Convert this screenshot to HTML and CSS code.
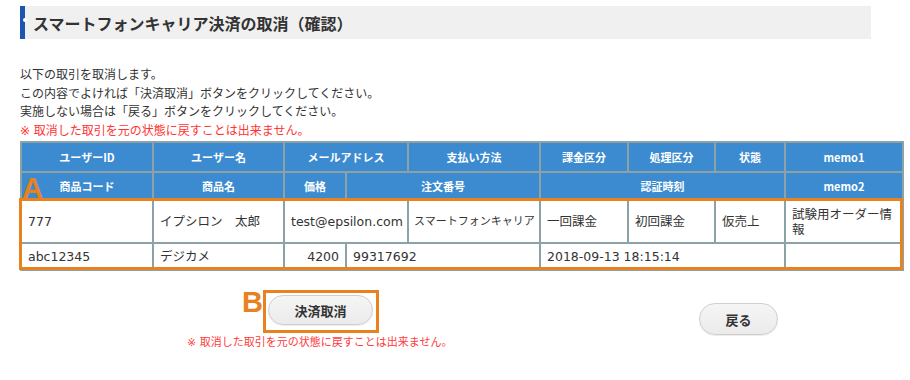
FILE: index.html
```html
<!DOCTYPE html>
<html lang="ja">
<head>
  <meta charset="UTF-8">
  <meta name="viewport" content="width=device-width, initial-scale=1.0">
  <title>スマートフォンキャリア決済の取消（確認）</title>
  <link rel="stylesheet" href="styles.css">
</head>
<body>
  <div class="page">
    <h1 class="title-bar">スマートフォンキャリア決済の取消（確認）</h1>

    <div class="intro">
      <p>以下の取引を取消します。</p>
      <p>この内容でよければ「決済取消」ボタンをクリックしてください。</p>
      <p>実施しない場合は「戻る」ボタンをクリックしてください。</p>
      <p class="warn">※ 取消した取引を元の状態に戻すことは出来ません。</p>
    </div>

    <div class="table-wrap">
      <table class="order">
        <colgroup>
          <col class="c-id">
          <col class="c-name">
          <col class="c-price">
          <col class="c-mail">
          <col class="c-pay">
          <col class="c-kakin">
          <col class="c-shori">
          <col class="c-state">
          <col class="c-memo">
        </colgroup>
        <thead>
          <tr class="h1">
            <th>ユーザーID</th>
            <th>ユーザー名</th>
            <th colspan="2">メールアドレス</th>
            <th>支払い方法</th>
            <th>課金区分</th>
            <th>処理区分</th>
            <th>状態</th>
            <th>memo1</th>
          </tr>
          <tr class="h2">
            <th>商品コード</th>
            <th>商品名</th>
            <th>価格</th>
            <th colspan="2">注文番号</th>
            <th colspan="3">認証時刻</th>
            <th>memo2</th>
          </tr>
        </thead>
        <tbody>
          <tr class="d1">
            <td>777</td>
            <td>イプシロン　太郎</td>
            <td colspan="2">test@epsilon.com</td>
            <td class="small">スマートフォンキャリア</td>
            <td>一回課金</td>
            <td>初回課金</td>
            <td>仮売上</td>
            <td>試験用オーダー情報</td>
          </tr>
          <tr class="d2">
            <td>abc12345</td>
            <td>デジカメ</td>
            <td class="num">4200</td>
            <td colspan="2">99317692</td>
            <td colspan="3">2018-09-13 18:15:14</td>
            <td></td>
          </tr>
        </tbody>
      </table>
      <div class="mark-box mark-rows"></div>
      <span class="mark-letter letter-a">A</span>
    </div>

    <div class="actions">
      <div class="cancel-group">
        <div class="btn-wrap">
          <button class="btn" type="button">決済取消</button>
          <div class="mark-box mark-btn"></div>
          <span class="mark-letter letter-b">B</span>
        </div>
        <p class="note">※ 取消した取引を元の状態に戻すことは出来ません。</p>
      </div>
      <button class="btn btn-back" type="button">戻る</button>
    </div>
  </div>
</body>
</html>
```

FILE: styles.css
```css
body {
  margin: 0;
  background: #fff;
  color: #333;
  font-family: "DejaVu Sans", "Noto Sans CJK JP", sans-serif;
}
p {
  margin: 0;
}
.page {
  padding: 6px 0 0 20px;
}

/* title */
.title-bar {
  position: relative;
  width: 851px;
  height: 33px;
  margin: 0;
  box-sizing: border-box;
  display: flex;
  align-items: center;
  padding-left: 8px;
  background: #f0f0f0;
  border-left: 5px solid #1c54b4;
  font-family: "Noto Sans CJK JP", sans-serif;
  font-size: 16px;
  font-weight: bold;
  color: #333;
}
.title-bar::before {
  content: "";
  position: absolute;
  left: -2px;
  top: 12px;
  width: 4px;
  height: 4px;
  border-radius: 50%;
  background: #fff;
}

/* intro */
.intro {
  margin-top: 27px;
  font-size: 12px;
  line-height: 18.5px;
  color: #333;
}
.intro .warn {
  color: #ff3333;
}

/* table */
.table-wrap {
  position: relative;
  width: 882px;
  margin-top: 1px;
}
.order {
  width: 882px;
  table-layout: fixed;
  border-collapse: collapse;
}
.c-id { width: 132px; }
.c-name { width: 131px; }
.c-price { width: 62px; }
.c-mail { width: 62px; }
.c-pay { width: 132px; }
.c-kakin { width: 88px; }
.c-shori { width: 87px; }
.c-state { width: 70px; }
.c-memo { width: 118px; }

.order th, .order td {
  border: 2px solid #8ca2a7;
  padding: 0;
}
.order th {
  background: #3c8bd0;
  color: #fff;
  font-family: "Noto Sans CJK JP", sans-serif;
  font-size: 11px;
  font-weight: bold;
  text-align: center;
}
.order tr.h1 { height: 30px; }
.order tr.h2 { height: 28px; }
.order tr.d1 { height: 43px; }
.order tr.d2 { height: 27px; }
.order td {
  padding: 0 4px 0 6px;
  font-size: 12.5px;
  line-height: 15px;
  color: #333;
  vertical-align: middle;
}
.order td.small {
  font-size: 11px;
  padding-left: 5px;
  padding-right: 0;
}
.order td.num {
  text-align: right;
  padding-right: 6px;
}

/* annotation marks */
.mark-box {
  position: absolute;
  border: 3px solid #e8821e;
  box-sizing: border-box;
  pointer-events: none;
}
.mark-letter {
  position: absolute;
  font-family: "Liberation Sans", Arial, sans-serif;
  font-size: 29px;
  font-weight: bold;
  line-height: 29px;
  color: #e8821e;
}
.mark-rows {
  left: -1px;
  top: 57px;
  width: 884px;
  height: 72px;
}
.letter-a {
  left: 2px;
  top: 33px;
}

/* actions */
.actions {
  display: flex;
  align-items: flex-start;
  margin-top: 24px;
}
.cancel-group {
  width: 512px;
  margin-left: 167px;
  display: flex;
  flex-direction: column;
  align-items: flex-start;
}
.btn-wrap {
  position: relative;
  margin-left: 81px;
}
.btn {
  height: 30px;
  width: 105px;
  border: 1px solid #cfcfcf;
  border-radius: 16px;
  background: linear-gradient(#f5f5f5, #ebebeb);
  box-shadow: 0 1px 1px rgba(0, 0, 0, 0.08);
  font-family: "Noto Sans CJK JP", sans-serif;
  font-size: 13px;
  font-weight: bold;
  color: #333;
  cursor: pointer;
}
.btn-back {
  width: 79px;
  height: 32px;
  margin-top: 8px;
}
.mark-btn {
  left: -5px;
  top: -5px;
  width: 116px;
  height: 43px;
}
.letter-b {
  left: -26px;
  top: -7px;
}
.note {
  margin-top: 11px;
  font-size: 11px;
  line-height: 14px;
  color: #ff3b3b;
}
```
